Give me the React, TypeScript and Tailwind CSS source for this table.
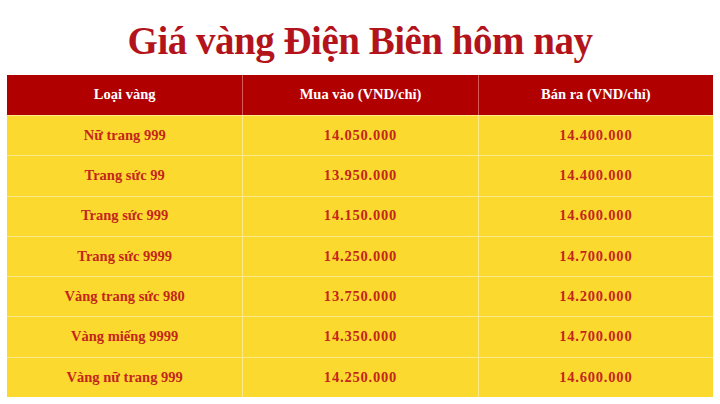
const rows = [
  { name: 'Nữ trang 999', buy: '14.050.000', sell: '14.400.000' },
  { name: 'Trang sức 99', buy: '13.950.000', sell: '14.400.000' },
  { name: 'Trang sức 999', buy: '14.150.000', sell: '14.600.000' },
  { name: 'Trang sức 9999', buy: '14.250.000', sell: '14.700.000' },
  { name: 'Vàng trang sức 980', buy: '13.750.000', sell: '14.200.000' },
  { name: 'Vàng miếng 9999', buy: '14.350.000', sell: '14.700.000' },
  { name: 'Vàng nữ trang 999', buy: '14.250.000', sell: '14.600.000' },
]

export default function App() {
  return (
    <div className="w-[720px] h-[404px] bg-white overflow-hidden font-['Liberation_Serif',serif]">
      <h1 className="h-[75px] pt-[19px] text-center text-[39px] leading-[44px] font-bold text-[#b3141c] tracking-[-0.5px]">
        Giá vàng Điện Biên hôm nay
      </h1>
      <div className="mx-[7px] w-[706px] grid grid-cols-3">
        {['Loại vàng', 'Mua vào (VND/chỉ)', 'Bán ra (VND/chỉ)'].map((h, i) => (
          <div
            key={h}
            className={`h-[40px] flex items-center justify-center bg-[#b10000] text-white text-[14.5px] font-bold ${i > 0 ? 'border-l border-[#d65a5a]' : ''}`}
          >
            {h}
          </div>
        ))}
        {rows.map((r) =>
          [r.name, r.buy, r.sell].map((c, i) => (
            <div
              key={r.name + i}
              className={`h-[40.3px] flex items-center justify-center bg-[#fcd92e] text-[#c3261c] font-bold border-t border-[#fbe98a] ${i > 0 ? 'border-l text-[14.5px] tracking-[0.8px]' : 'text-[14.5px]'}`}
            >
              {c}
            </div>
          ))
        )}
      </div>
    </div>
  )
}
